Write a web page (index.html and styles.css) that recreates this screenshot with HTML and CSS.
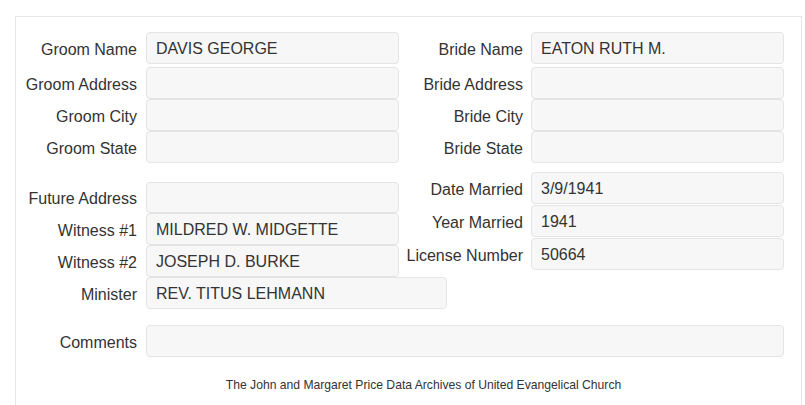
FILE: index.html
```html
<!DOCTYPE html>
<html>
<head>
    <meta charset="utf-8">
    <title>Marriage Record</title>
    <link rel="stylesheet" href="styles.css">
</head>
<body>
    <div class="panel">
        <div class="cols">
            <div class="col col-left">
                <div class="row"><label>Groom Name</label><div class="field">DAVIS GEORGE</div></div>
                <div class="row gap3"><label>Groom Address</label><div class="field"></div></div>
                <div class="row"><label>Groom City</label><div class="field"></div></div>
                <div class="row"><label>Groom State</label><div class="field"></div></div>
            </div>
            <div class="col col-right">
                <div class="row"><label>Bride Name</label><div class="field">EATON RUTH M.</div></div>
                <div class="row gap3"><label>Bride Address</label><div class="field"></div></div>
                <div class="row"><label>Bride City</label><div class="field"></div></div>
                <div class="row"><label>Bride State</label><div class="field"></div></div>
            </div>
        </div>

        <div class="cols">
            <div class="col col-left sec2-left">
                <div class="row short"><label>Future Address</label><div class="field"></div></div>
                <div class="row"><label>Witness #1</label><div class="field">MILDRED W. MIDGETTE</div></div>
                <div class="row"><label>Witness #2</label><div class="field">JOSEPH D. BURKE</div></div>
                <div class="row"><label>Minister</label><div class="field wide">REV. TITUS LEHMANN</div></div>
            </div>
            <div class="col col-right sec2-right">
                <div class="row"><label>Date Married</label><div class="field">3/9/1941</div></div>
                <div class="row gap1"><label>Year Married</label><div class="field">1941</div></div>
                <div class="row gap1"><label>License Number</label><div class="field">50664</div></div>
            </div>
        </div>

        <div class="row comments"><label>Comments</label><div class="field full"></div></div>

        <p class="footer">The John and Margaret Price Data Archives of United Evangelical Church</p>
    </div>
</body>
</html>
```

FILE: styles.css
```css
html, body { margin: 0; padding: 0; overflow: hidden; background: #fff; }
body { font-family: "Liberation Sans", Arial, sans-serif; color: #333; }

.panel {
  margin: 16px 3px 0 15px;
  border: 1px solid #e6e6e6;
  border-bottom: 0;
  padding: 15px 17px 0 0;
  min-height: 400px;
}

.cols { display: flex; align-items: flex-start; }
.col-left { width: 383px; }
.col-right { flex: 1; }
.sec2-left { margin-top: 19px; }
.sec2-right { margin-top: 9px; }

.row { display: flex; align-items: center; height: 32px; }
.row.gap3 { margin-top: 3px; }
.row.gap1 { margin-top: 1px; }
.row.short { height: 31px; }
.row label {
  flex: 1;
  text-align: right;
  font-size: 16px;
  padding: 3px 9px 0 0;
  white-space: nowrap;
}
.col-right .row label { padding-right: 8px; }

.field {
  box-sizing: border-box;
  width: 253px;
  height: 32px;
  flex: none;
  border: 1px solid #e4e4e4;
  border-radius: 4px;
  background: #f7f7f7;
  padding: 1px 9px 0 9px;
  font-size: 16px;
  line-height: 29px;
  white-space: nowrap;
}
.row.short .field { height: 31px; }
.field.wide { width: 301px; margin-right: -48px; }

.comments { margin-top: 16px; }
.comments label { flex: none; width: 121px; }
.field.full { flex: 1; width: auto; }

.footer {
  margin: 21px 0 0 0;
  padding-left: 47px;
  text-align: center;
  font-size: 12.15px;
}
```
